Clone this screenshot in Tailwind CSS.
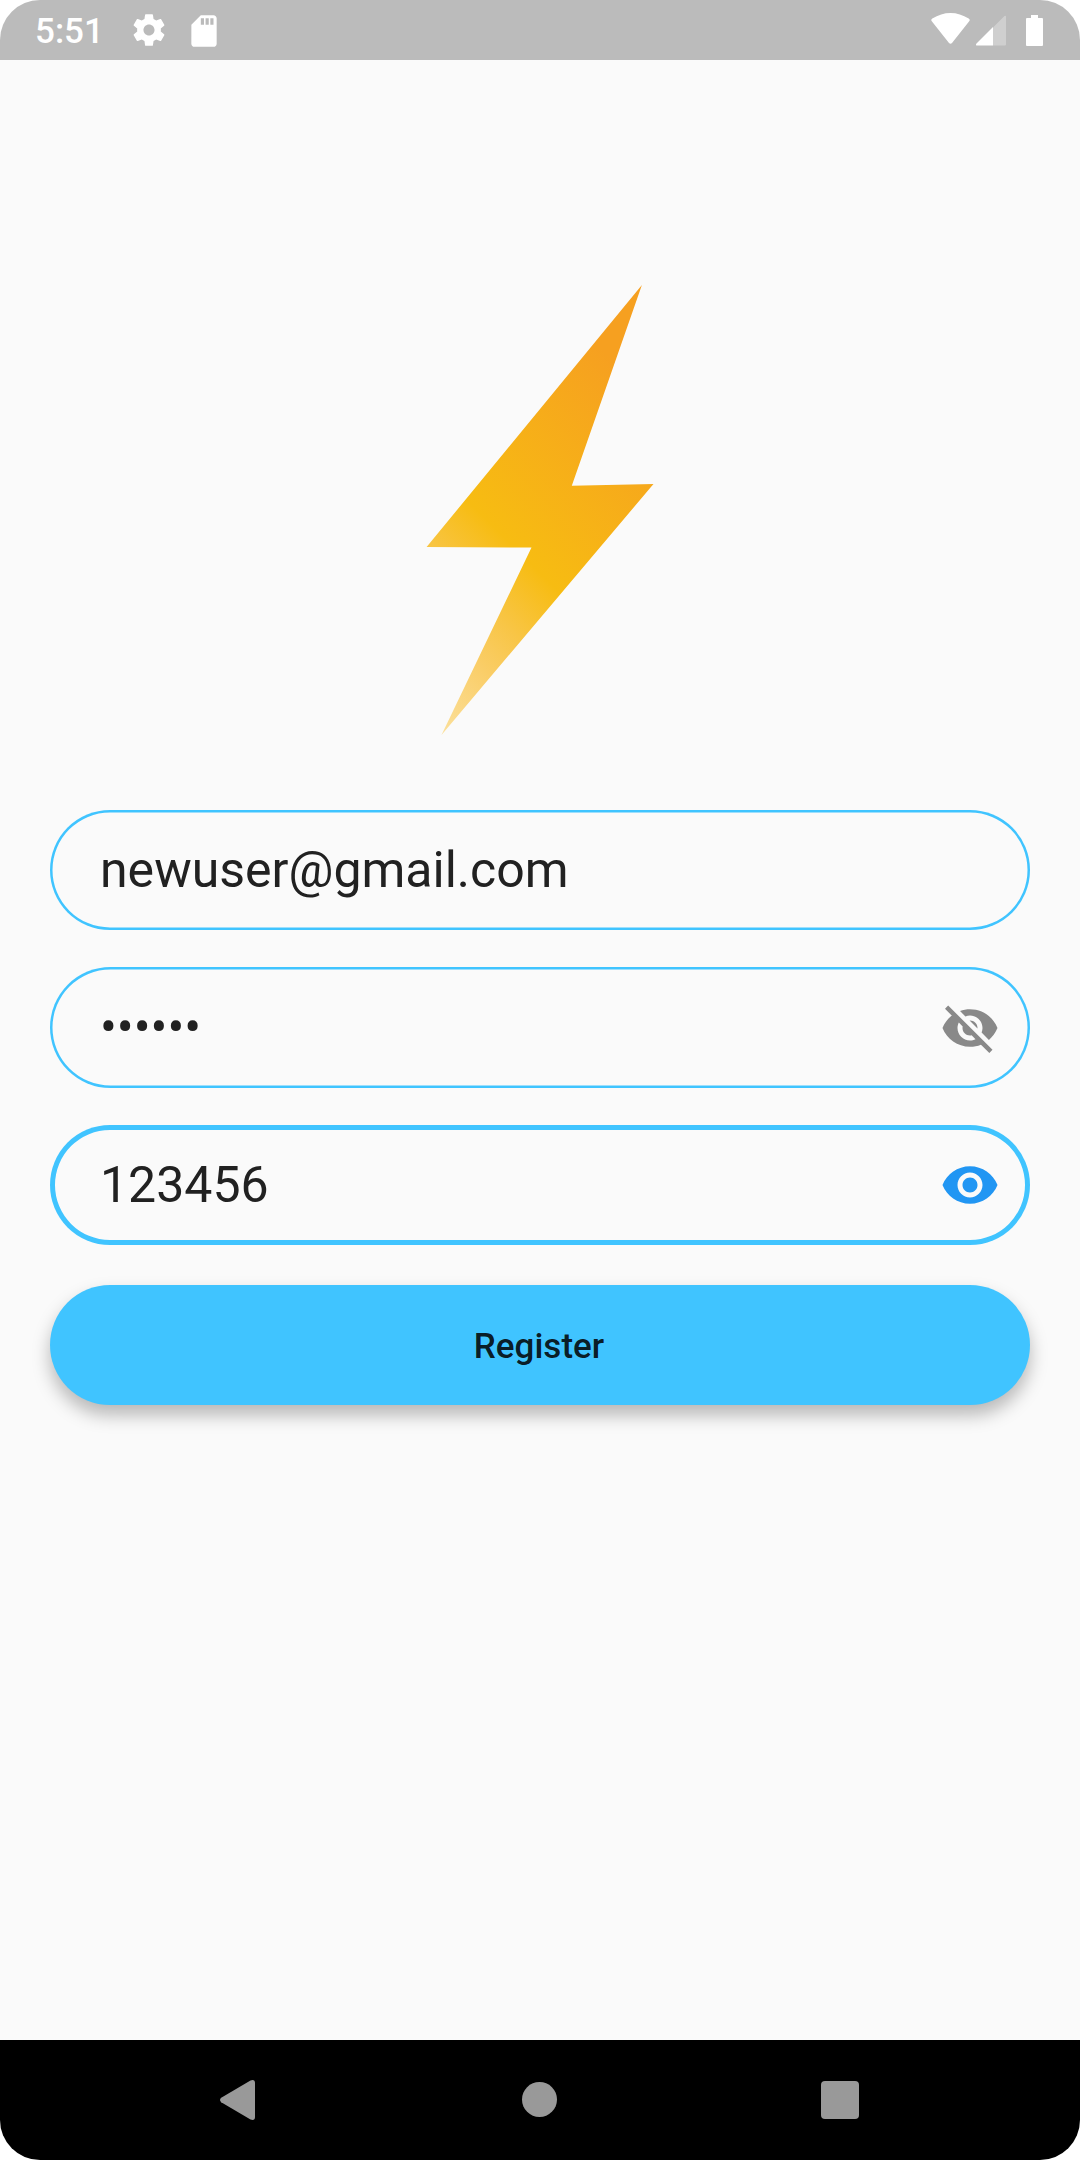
<!DOCTYPE html>
<html lang="en">
<head>
<meta charset="utf-8">
<title>Register</title>
<script src="https://cdn.jsdelivr.net/npm/@tailwindcss/browser@4"></script>
</head>
<body class="bg-white">
<div class="flex h-[2160px] w-[1080px] flex-col overflow-hidden rounded-[40px] bg-[#fafafa] font-['Roboto',sans-serif] text-[#212121]">
  <header class="flex h-[60px] shrink-0 items-center justify-between bg-[#bbbbbb] pr-[37px] pl-[35px] text-white">
    <div class="flex items-center">
      <span class="w-[95px] pt-[3px] text-[35px] leading-[57px] font-medium">5:51</span>
      <svg class="size-[38px]" viewBox="0 0 24 24" fill="currentColor"><path d="M19.43 12.98c.04-.32.07-.64.07-.98s-.03-.66-.07-.98l2.11-1.65c.19-.15.24-.42.12-.64l-2-3.46c-.12-.22-.39-.3-.61-.22l-2.49 1c-.52-.4-1.08-.73-1.69-.98l-.38-2.65C14.46 2.18 14.25 2 14 2h-4c-.25 0-.46.18-.49.42l-.38 2.65c-.61.25-1.17.59-1.69.98l-2.49-1c-.23-.09-.49 0-.61.22l-2 3.46c-.13.22-.07.49.12.64l2.11 1.65c-.04.32-.07.65-.07.98s.03.66.07.98l-2.11 1.65c-.19.15-.24.42-.12.64l2 3.46c.12.22.39.3.61.22l2.49-1c.52.4 1.08.73 1.69.98l.38 2.65c.03.24.24.42.49.42h4c.25 0 .46-.18.49-.42l.38-2.65c.61-.25 1.17-.59 1.69-.98l2.49 1c.23.09.49 0 .61-.22l2-3.46c.12-.22.07-.49-.12-.64l-2.11-1.65zM12 15.5c-1.93 0-3.5-1.57-3.5-3.5s1.57-3.5 3.5-3.5 3.5 1.57 3.5 3.5-1.57 3.5-3.5 3.5z"/></svg>
      <svg class="mt-px ml-[17px] size-[38px]" viewBox="0 0 24 24" fill="currentColor"><path d="M18 2h-8L4.02 8 4 20c0 1.1.9 2 2 2h12c1.1 0 2-.9 2-2V4c0-1.100-.9-2-2-2zm-6 6h-2V4h2v4zm3 0h-2V4h2v4zm3 0h-2V4h2v4z"/></svg>
    </div>
    <div class="flex items-center">
      <svg class="mt-[-2px] h-[32px] w-[39px]" viewBox="0 0 39 32" fill="currentColor"><path d="M1 8.500Q-.6 6.800 1.300 5.600Q10 0 19.500 0Q29 0 37.700 5.600Q39.600 6.800 38 8.500L21 30Q19.500 31.500 18 30Z"/></svg>
      <svg class="ml-[6px] h-[31px] w-[31px]" viewBox="0 0 31 31" fill="currentColor"><path fill-opacity=".3" d="M17 12.500L28.500 1Q30 0 30 1.800V29.500Q30 30.500 29 30.500H17Z"/><path d="M17 12V30.500H1.200Q-.8 30.500 .5 28.500Z"/></svg>
      <svg class="ml-[19px] h-[31px] w-[17px]" viewBox="0 0 17 31" fill="currentColor"><path d="M5 0H12V3H16Q17 3 17 4V30Q17 31 16 31H1Q0 31 0 30V4Q0 3 1 3H5Z"/></svg>
    </div>
  </header>

  <main class="flex grow flex-col px-[50px] pt-[210px]">
    <svg class="h-[480px] w-[280px] self-center" viewBox="0 0 280 480">
      <defs>
        <linearGradient id="bolt" gradientUnits="userSpaceOnUse" x1="41.700" y1="464.700" x2="314.700" y2="191.700">
          <stop offset="0" stop-color="#fbe09c"/>
          <stop offset=".2" stop-color="#facd66"/>
          <stop offset=".32" stop-color="#f8c545"/>
          <stop offset=".476" stop-color="#f7bc12"/>
          <stop offset="1" stop-color="#f6a020"/>
        </linearGradient>
      </defs>
      <path fill="url(#bolt)" d="M241.900 15L171.800 215.800L253.500 214L41.500 464.900L131.500 277.500L26.600 277Z"/>
    </svg>

    <form class="flex flex-col">
      <div class="mt-[60px] flex h-[120px] items-center rounded-full pl-[50px] text-[50px] shadow-[inset_0_0_0_2.500px_#40c4ff]">newuser@gmail.com</div>
      <div class="mt-[37px] flex h-[121px] items-center justify-between rounded-full pr-[30px] pl-[50px] text-[50px] shadow-[inset_0_0_0_2.500px_#40c4ff]">
        <span>••••••</span>
        <svg class="size-[60px] text-[#898989]" viewBox="0 0 24 24" fill="currentColor"><path d="M12 7c2.760 0 5 2.240 5 5 0 .65-.13 1.260-.36 1.830l2.920 2.920c1.510-1.260 2.700-2.890 3.430-4.750-1.730-4.390-6-7.500-11-7.500-1.400 0-2.740.25-3.980.7l2.160 2.160C10.740 7.130 11.350 7 12 7zM2 4.270l2.280 2.280.46.46C3.080 8.300 1.780 10.020 1 12c1.730 4.390 6 7.500 11 7.500 1.550 0 3.030-.3 4.380-.84l.42.42L19.730 22 21 20.730 3.270 3 2 4.270zM7.530 9.800l1.550 1.550c-.05.21-.08.43-.08.65 0 1.660 1.340 3 3 3 .22 0 .44-.03.65-.08l1.550 1.550c-.67.33-1.410.53-2.200.53-2.760 0-5-2.240-5-5 0-.79.2-1.530.53-2.200zm4.310-.78l3.150 3.150.02-.16c0-1.660-1.340-3-3-3l-.17.01z"/></svg>
      </div>
      <div class="mt-[37px] flex h-[120px] items-center justify-between rounded-full pr-[30px] pl-[50px] text-[50px] shadow-[inset_0_0_0_5px_#40c4ff]">
        <span>123456</span>
        <svg class="size-[60px] text-[#2196f3]" viewBox="0 0 24 24" fill="currentColor"><path d="M12 4.500C7 4.500 2.730 7.610 1 12c1.730 4.390 6 7.500 11 7.500s9.270-3.110 11-7.500c-1.730-4.390-6-7.500-11-7.500zM12 17c-2.760 0-5-2.240-5-5s2.240-5 5-5 5 2.240 5 5-2.240 5-5 5zm0-8c-1.660 0-3 1.340-3 3s1.340 3 3 3 3-1.340 3-3-1.340-3-3-3z"/></svg>
      </div>
      <button type="button" class="mt-[40px] flex h-[120px] items-center justify-center rounded-full bg-[#40c4ff] pt-[4px] pr-[2px] text-[35px] font-medium text-black/87 shadow-[0_10px_18px_0_rgba(0,0,0,0.27)]">Register</button>
    </form>
  </main>

  <nav class="flex h-[120px] shrink-0 items-center bg-black pl-[220px] text-[#999]">
    <svg class="h-[40px] w-[35px]" viewBox="0 0 35 40" fill="currentColor"><path d="M1.200 17.800L30.500 .5Q35 -1 35 3V37Q35 41 30.500 39.500L1.200 22.200Q-1.200 20 1.200 17.800Z"/></svg>
    <div class="mb-[2px] ml-[267px] size-[35px] rounded-full bg-[#999]"></div>
    <div class="ml-[264px] size-[38px] rounded-[4px] bg-[#999]"></div>
  </nav>
</div>
</body>
</html>
